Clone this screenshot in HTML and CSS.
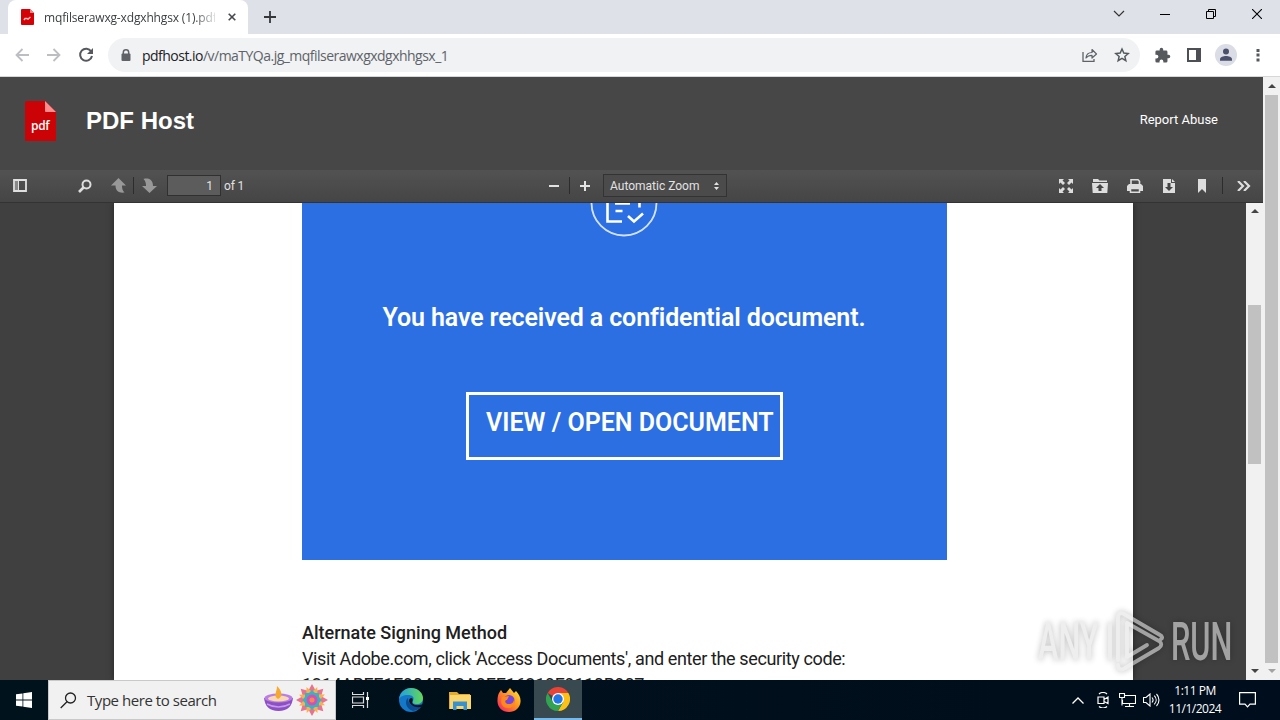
FILE: index.html
```
<!DOCTYPE html>
<html lang="en">
<head>
    <meta charset="UTF-8">
    <title>mqfilserawxg-xdgxhhgsx (1).pdf</title>
    <link rel="stylesheet" href="styles.css">
</head>
<body>

    <!-- browser tabs -->
    <div class="tabstrip">
        <div class="tab">
            <svg class="favicon" width="13" height="16" viewBox="0 0 13 16"><path d="M1 0h8l4 4v11a1 1 0 0 1-1 1H1a1 1 0 0 1-1-1V1a1 1 0 0 1 1-1z" fill="#d40206"/><path d="M9 0l4 4H9z" fill="#f08a8a"/><path d="M3 11l1-1.500h2l1 .5 2.500-2" stroke="#fbb" stroke-width="1.500" fill="none"/></svg>
            <span class="tab-title">mqfilserawxg-xdgxhhgsx (1).pdf</span>
            <svg class="tab-close" width="8" height="8" viewBox="0 0 8 8"><path d="M.7.7l6.600 6.600M7.300.7L.7 7.300" stroke="#45484c" stroke-width="1.600"/></svg>
        </div>
        <svg class="new-tab" width="12" height="12" viewBox="0 0 12 12"><path d="M6 0v12M0 6h12" stroke="#35373b" stroke-width="1.800"/></svg>
        <div class="window-buttons">
            <span><svg width="12" height="8" viewBox="0 0 12 8"><path d="M1 1l5 5 5-5" fill="none" stroke="#333" stroke-width="1.200"/></svg></span>
            <span><svg width="10" height="10" viewBox="0 0 10 10"><path d="M0 5.500h10" stroke="#000"/></svg></span>
            <span><svg width="10" height="10" viewBox="0 0 10 10"><path d="M.5 2.500h7v7h-7zM2.500 2.500v-2h7v7h-2" fill="none" stroke="#000"/></svg></span>
            <span><svg width="10" height="10" viewBox="0 0 10 10"><path d="M0 0l10 10M10 0L0 10" stroke="#000" stroke-width="1.100"/></svg></span>
        </div>
    </div>

    <!-- address bar -->
    <div class="navbar">
        <span class="nav-icon"><svg width="14" height="14" viewBox="0 0 14 14"><path d="M14 7H1.500M7.500 1l-6 6 6 6" fill="none" stroke="#bcbec1" stroke-width="1.800"/></svg></span>
        <span class="nav-icon"><svg width="14" height="14" viewBox="0 0 14 14"><path d="M0 7h12.500M6.500 1l6 6-6 6" fill="none" stroke="#bcbec1" stroke-width="1.800"/></svg></span>
        <span class="nav-icon"><svg width="16" height="16" viewBox="0 0 16 16"><path d="M13.200 4.500A6 6 0 1 0 14 9" fill="none" stroke="#55585c" stroke-width="2"/><path d="M15 1v6H9z" fill="#55585c"/></svg></span>
        <div class="omnibox">
            <svg width="10" height="13" viewBox="0 0 10 13"><path d="M2.300 5V3.500a2.700 2.700 0 0 1 5.400 0V5" fill="none" stroke="#5f6368" stroke-width="1.500"/><rect x=".5" y="4.500" width="9" height="7.500" rx="1" fill="#5f6368"/></svg>
            <span class="url"><b>pdfhost.io</b>/v/maTYQa.jg_mqfilserawxgxdgxhhgsx_1</span>
            <svg class="share" width="16" height="14" viewBox="0 0 16 14"><path d="M1 4v9.300h11V11" fill="none" stroke="#5f6368" stroke-width="1.300"/><path d="M4 10c.3-4 2.500-5.500 6-5.500V1.500L14.500 6 10 10V7.300C7.500 7.300 5.500 8 4 10z" fill="none" stroke="#5f6368" stroke-width="1.200" stroke-linejoin="round"/></svg>
            <svg width="16" height="16" viewBox="0 0 24 24"><path d="M12 3l2.700 6.100 6.600.6-5 4.400 1.500 6.500L12 17.200l-5.800 3.400 1.500-6.500-5-4.400 6.600-.6z" fill="none" stroke="#55595e" stroke-width="2.200"/></svg>
        </div>
        <span class="nav-icon"><svg width="17" height="17" viewBox="0 0 24 24"><path d="M20.500 11H19V7a2 2 0 0 0-2-2h-4V3.500a2.500 2.500 0 0 0-5 0V5H4a2 2 0 0 0-2 2v3.800h1.500a2.700 2.700 0 0 1 0 5.400H2V20a2 2 0 0 0 2 2h3.800v-1.500a2.700 2.700 0 0 1 5.400 0V22H17a2 2 0 0 0 2-2v-4h1.500a2.500 2.500 0 0 0 0-5z" fill="#55585c"/></svg></span>
        <span class="nav-icon"><svg width="14" height="14" viewBox="0 0 14 14"><path d="M1 1h12v12H1z" fill="none" stroke="#4c4f53" stroke-width="2"/><path d="M9 0h5v14H9z" fill="#4c4f53"/></svg></span>
        <span class="nav-icon avatar"><svg width="22" height="22" viewBox="0 0 22 22"><circle cx="11" cy="11" r="11" fill="#dadce6"/><circle cx="11" cy="7.500" r="3" fill="#4b506b"/><path d="M5 16.800v-1.500c0-2.200 3.500-3.300 6-3.300s6 1.100 6 3.300v1.500z" fill="#4b506b"/></svg></span>
        <span class="nav-icon"><svg width="4" height="14" viewBox="0 0 4 14"><path d="M.5 1h3v3h-3zM.5 5.500h3v3h-3zM.5 10.500h3v3h-3z" fill="#55585c"/></svg></span>
    </div>

    <div class="content">
        <div class="site">
            <div class="site-header">
                <svg class="logo" width="32" height="41" viewBox="0 0 32 41"><path d="M2 0h18l11 11v28a1 1 0 0 1-1 1H1a1 1 0 0 1-1-1V2a2 2 0 0 1 2-2z" fill="#cc0306"/><path d="M20 0l11 11H21a1 1 0 0 1-1-1z" fill="#ff8d8d"/><text x="6" y="29" class="logo-text">pdf</text></svg>
                <h1>PDF Host</h1>
                <span class="report">Report Abuse</span>
            </div>

            <div class="viewer-bar">
                <div class="group left">
                    <svg width="14" height="13" viewBox="0 0 14 13"><path d="M1 1h12v11H1z" fill="none" stroke="#e0e0e0" stroke-width="1.800"/><path d="M2 2h3v9H2z" fill="#888"/><path d="M5.500 1v11" stroke="#e0e0e0"/></svg>
                    <svg class="find" width="14" height="14" viewBox="0 0 14 14"><circle cx="8.500" cy="5.500" r="4" fill="none" stroke="#ddd" stroke-width="2"/><path d="M5.500 8.500L1 13" stroke="#ddd" stroke-width="2.600"/></svg>
                    <svg class="up" width="15" height="15" viewBox="0 0 15 15"><path d="M7.500 0L15 7.500h-4c0 3 .5 5 2.500 7-5 .7-9-1-9-7H0z" fill="#989898"/></svg>
                    <i></i>
                    <svg class="down" width="15" height="15" viewBox="0 0 15 15"><path d="M7.500 15L0 8h4c0-3-.5-5-2.500-7C7-.5 11 2 11 8h4z" fill="#989898"/></svg>
                    <span class="page-number">1</span>
                    <span class="page-count">of 1</span>
                </div>
                <div class="group middle">
                    <svg width="10" height="10" viewBox="0 0 10 10"><path d="M0 5h10" stroke="#e2e2e2" stroke-width="2"/></svg>
                    <i></i>
                    <svg width="10" height="10" viewBox="0 0 10 10"><path d="M0 5h10M5 0v10" stroke="#e2e2e2" stroke-width="2"/></svg>
                    <span class="zoom-select">Automatic Zoom
                        <svg width="5" height="8" viewBox="0 0 5 8"><path d="M0 3l2.500-3L5 3zM0 5l2.500 3L5 5z" fill="#e2e2e2"/></svg>
                    </span>
                </div>
                <div class="group right">
                    <svg width="14" height="14" viewBox="0 0 14 14"><path d="M0 0h5L3.500 1.500 6 4 4 6 1.500 3.500 0 5zM14 0v5l-1.500-1.500L10 6 8 4l2.500-2.500L9 0zM0 14V9l1.500 1.500L4 8l2 2-2.500 2.500L5 14zM14 14H9l1.500-1.500L8 10l2-2 2.500 2.500L14 9z" fill="#ddd"/></svg>
                    <svg width="16" height="14" viewBox="0 0 16 14"><path d="M1 0h5l1.500 1.500H15V3H1zM0 4h16l-.7 10H.7z" fill="#ddd"/><path d="M8 5l4 4H9.500v3h-3V9H4z" fill="#444"/></svg>
                    <svg width="16" height="14" viewBox="0 0 16 14"><path d="M4 5V.8h7l1.500 1.500V5" fill="none" stroke="#ddd" stroke-width="1.600"/><path d="M2 5h12l2 2v5h-3v-2H3v2H0V7z" fill="#ddd"/><path d="M3.500 9.500h9v3.700h-9z" fill="none" stroke="#ddd" stroke-width="1.500"/></svg>
                    <svg width="14" height="14" viewBox="0 0 14 14"><path d="M1 0h8v4h4v10H1z" fill="#ddd"/><path d="M10 0l3 3h-3z" fill="#ddd"/><path d="M5.500 4h3v4H11l-4 4-4-4h2.500z" fill="#444"/></svg>
                    <svg class="bookmark" width="8" height="14" viewBox="0 0 8 14"><path d="M0 0h8v14L4 10l-4 4z" fill="#ddd"/></svg>
                    <i></i>
                    <svg width="14" height="10" viewBox="0 0 14 10"><path d="M1 0l5 5-5 5M7 0l5 5-5 5" fill="none" stroke="#ddd" stroke-width="2.200"/></svg>
                </div>
            </div>

            <div class="viewer">
                <div class="page">
                    <div class="banner">
                        <svg class="doc-icon" width="68" height="35" viewBox="0 0 68 35"><g fill="none" stroke="#fff"><circle cx="34" cy="1" r="32.500" stroke-width="1.800" stroke-opacity=".8"/><path d="M17.500 0v19.500h14.500M25 1.500h15M25.500 9h7M49.500 0v5.500" stroke-width="2.600"/><path d="M38 14l6 5.500 9-8" stroke-width="2.600"/></g></svg>
                        <h2>You have received a confidential document.</h2>
                        <a class="open-button">VIEW / OPEN DOCUMENT</a>
                    </div>
                    <div class="method">
                        <b>Alternate Signing Method</b>
                        <p>Visit Adobe.com, click 'Access Documents', and enter the security code:</p>
                        <p class="code">1314ABFE1E904BA3A9EE16319F9110B907</p>
                    </div>
                </div>
                <div class="scrollbar inner">
                    <span class="arrow up-arrow"></span>
                    <span class="thumb"></span>
                    <span class="arrow down-arrow"></span>
                </div>
            </div>
        </div>
        <div class="scrollbar outer">
            <span class="arrow up-arrow"></span>
            <span class="thumb"></span>
            <span class="arrow down-arrow"></span>
        </div>
    </div>

    <div class="watermark">
        <span>ANY</span>
        <svg width="58" height="64" viewBox="0 0 58 64"><g fill="none" stroke-width="3.800" stroke-linejoin="round" stroke-linecap="round"><path d="M3 14v35M11 50V8c0-4 2-6 6-4l36 21c2 1 3 3 1 4"/><path d="M11 55c0 4 3 6 7 3l34-20c3-2 3-5 0-7L20 13v34l20-12"/></g></svg>
        <span>RUN</span>
    </div>

    <!-- windows taskbar -->
    <div class="taskbar">
        <div class="start"><svg width="16" height="16" viewBox="0 0 16 16"><path d="M0 2.300l6.500-.9v6.100H0zM7.300 1.300L16 0v7.500H7.300zM0 8.400h6.500v6.200L0 13.700zM7.300 8.400H16V16l-8.700-1.300z" fill="#fff"/></svg></div>
        <div class="search">
            <svg width="17" height="17" viewBox="0 0 17 17"><circle cx="10.500" cy="6" r="5" fill="none" stroke="#222" stroke-width="1.300"/><path d="M7 9.700L.7 16" stroke="#222" stroke-width="1.300"/></svg>
            <span>Type here to search</span>
            <svg class="lamp" width="29" height="23" viewBox="0 0 29 23"><path d="M0 9h29c-1 8-5 13-14.500 13S1 17 0 9z" fill="#8c4fc4"/><ellipse cx="14.500" cy="9" rx="14" ry="4.500" fill="#b97fe6"/><ellipse cx="14.500" cy="9.500" rx="10.500" ry="3" fill="#f8d9b0"/><path d="M14 10c-5-3-1-7-1-13 4 4 7 10 1 13z" fill="#f7a92d"/><path d="M3 15c7 4 16 4 23 0" stroke="#c79aed" stroke-width="1.500" fill="none"/></svg>
            <svg class="flower" width="32" height="32" viewBox="-16 -16 32 32"><g fill="#e8728f"><path d="M0-16L5-7H-5zM0 16L5 7H-5zM16 0L7 5V-5zM-16 0L-7 5V-5z"/><path d="M0-16L5-7H-5zM0 16L5 7H-5zM16 0L7 5V-5zM-16 0L-7 5V-5z" transform="rotate(45)"/></g><g fill="#fbb04c"><path d="M0-14L4-5H-4zM0 14L4 5H-4zM14 0L5 4V-4zM-14 0L-5 4V-4z" transform="rotate(22)"/><path d="M0-14L4-5H-4zM0 14L4 5H-4zM14 0L5 4V-4zM-14 0L-5 4V-4z" transform="rotate(67)"/></g><path d="M-7-7H7V7H-7z" fill="#35b5c4"/><path d="M-7-7H7V7H-7z" transform="rotate(45)" fill="#35b5c4"/><circle r="5.500" fill="#d650b4"/><circle r="2.500" fill="#ef8a57"/></svg>
        </div>
        <div class="apps">
            <span><svg width="18" height="16" viewBox="0 0 18 16"><path d="M.5 0v2.500h11V0M.5 16v-2.500h11V16M.5 5h11v6H.5zM15.500 0v16" fill="none" stroke="#ddd" stroke-width="1.200"/><path d="M14 5h3v3h-3z" fill="#fff"/></svg></span>
            <span>
                <svg width="24" height="24" viewBox="0 0 24 24"><defs><linearGradient id="edge" x1="0" x2="1"><stop offset="0" stop-color="#1f9fe0"/><stop offset="1" stop-color="#63d957"/></linearGradient></defs><circle cx="12" cy="12" r="12" fill="#1378c9"/><path d="M0 11C1 4 6 0 12 0c7 0 12 5 12 10 0 4-3 6-6 6-4 0-5-1-4-3 2-4-1-6-5-6-5 0-8 2-9 4z" fill="url(#edge)"/><path d="M9 10c-4 3-2 11 5 13 4-.5 7-2.500 9-6-6 3-14 1-14-7z" fill="#0c4b90"/><path d="M13 10c2 2-1 4 1 6 3 2 7 1 10 0v2c-5 3-13 0-14-5 0-2 1-3 3-3z" fill="#06121e"/></svg>
            </span>
            <span><svg width="22" height="19" viewBox="0 0 22 19"><path d="M0 1h8l2 2h11v15H0z" fill="#e9a92c"/><path d="M1 4h21v14H1z" fill="#fbd66d"/><path d="M4 10.500h14V19h-3.500v-4h-7v4H4z" fill="#3a91cf"/></svg></span>
            <span>
                <svg width="24" height="24" viewBox="0 0 24 24"><defs><linearGradient id="fox" x1="1" x2="0" y1="0" y2="1"><stop offset="0" stop-color="#fff044"/><stop offset=".45" stop-color="#ff9420"/><stop offset="1" stop-color="#f5156c"/></linearGradient></defs><path d="M2 5l2-3 2 3 3 0 4-5 4 5 2-2c3 3 5 7 4.500 11C23 20 18 24 12 24 5 24 0 19 .5 12 .6 9 1 7 2 5z" fill="url(#fox)"/><circle cx="12" cy="12.500" r="5.500" fill="#7446df"/><path d="M5 9l7-1-2 4c-3 0-2 4 2 4 3 0 5-2 5-5 2 6-2 9-6 9-6 0-8-5-6-11z" fill="#ff8a1c"/></svg>
            </span>
            <span class="active"><svg width="24" height="24" viewBox="0 0 24 24"><path d="M12 12L1.600 6A12 12 0 0 1 22.400 6z" fill="#e94335"/><path d="M12 12V6h10.400A12 12 0 0 1 12 24l5.200-9z" fill="#fbc116"/><path d="M12 12l5.200 3L12 24A12 12 0 0 1 1.600 6l5.200 9z" fill="#32a350"/><circle cx="12" cy="12" r="6" fill="#fff"/><circle cx="12" cy="12" r="4.700" fill="#2378e8"/></svg></span>
        </div>
        <div class="tray">
            <svg width="12" height="7" viewBox="0 0 12 7"><path d="M.5 6.500L6 1l5.500 5.500" fill="none" stroke="#fff" stroke-width="1.300"/></svg>
            <svg class="meet" width="12" height="16" viewBox="0 0 12 16"><g fill="none" stroke="#fff" stroke-width="1.200"><path d="M1 5h6v6.500H1zM7 7.500L11 5v6.500L7 9.500M2 2c2-2 6-2 8 0M2 14.500c2 2 6 2 8 0"/></g></svg>
            <svg class="net" width="17" height="14" viewBox="0 0 17 14"><path d="M5.500 2.500h11v8h-13V7M10.500 10.500v3M6 13.500h9M.5.500h5v4h-5zM3 4.500v8" fill="none" stroke="#fff" stroke-width="1.100"/></svg>
            <svg class="sound" width="17" height="14" viewBox="0 0 17 14"><path d="M.5 4.500h2.500L7 1v12L3 9.500H.5zM9 4.500c1.300 1.500 1.300 3.500 0 5M11.300 2.700c2.500 2.500 2.500 6 0 8.600M13.500 1c3.300 3.500 3.300 8.500 0 12" fill="none" stroke="#fff" stroke-width="1.100"/></svg>
            <div class="clock">1:11 PM<br>11/1/2024</div>
            <svg class="note" width="17" height="16" viewBox="0 0 17 16"><path d="M.6.6h15.800v11.500H11L8.500 14.800 6 12.100H.6z" fill="none" stroke="#fff" stroke-width="1.200"/></svg>
        </div>
    </div>

</body>
</html>
```

FILE: styles.css
```
* {
    box-sizing: border-box;
}
body {
    margin: 0;
    width: 1280px;
    height: 720px;
    overflow: hidden;
    display: flex;
    flex-direction: column;
    font-family: "Open Sans", sans-serif;
    position: relative;
}
svg {
    display: block;
    flex-shrink: 0;
}
.tabstrip {
    height: 34px;
    background: #dee1e8;
    display: flex;
    align-items: center;
    padding-left: 8px;
}
.tab {
    width: 240px;
    height: 34px;
    background: white;
    border-radius: 8px 8px 0 0;
    display: flex;
    align-items: center;
    padding-left: 13px;
}
.tab-title {
    width: 171px;
    margin-left: 10px;
    overflow: hidden;
    white-space: nowrap;
    font-size: 12px;
    letter-spacing: -0.15px;
    color: #3c4043;
    -webkit-mask-image: linear-gradient(to right, #000 150px, transparent 175px);
    mask-image: linear-gradient(to right, #000 150px, transparent 175px);
}
.tab-close {
    margin-left: 13px;
}
.new-tab {
    margin-left: 16px;
}
.window-buttons {
    display: flex;
    margin-left: auto;
    margin-top: -6px;
}
.window-buttons span {
    width: 46px;
    display: flex;
    align-items: center;
    justify-content: center;
}
.navbar {
    height: 43px;
    background: white;
    border-bottom: 1px solid #d5d7da;
    display: flex;
    align-items: center;
    padding: 0 6px;
}
.nav-icon {
    width: 32px;
    display: flex;
    justify-content: center;
}
.omnibox {
    width: 1032px;
    height: 34px;
    margin: 0 6px;
    border-radius: 17px;
    background: #f0f2f4;
    display: flex;
    align-items: center;
    padding: 0 10px 0 13px;
}
.url {
    margin-left: 11px;
    font-size: 14px;
    letter-spacing: -0.52px;
    color: #5f6368;
    white-space: nowrap;
}
.url b {
    font-weight: normal;
    color: #202124;
}
.share {
    margin-left: auto;
    margin-right: 16px;
}
.content {
    height: 603px;
    display: flex;
}
.site {
    width: 1263px;
    display: flex;
    flex-direction: column;
}
.site-header {
    height: 93px;
    background: #474747;
    color: white;
    display: flex;
    align-items: center;
    padding: 0 45px 5px 25px;
}
.logo-text {
    font: 600 12px "Open Sans", sans-serif;
    letter-spacing: -0.3px;
    fill: white;
}
h1 {
    margin: 0 0 0 29px;
    font: bold 24px "Liberation Sans", sans-serif;
}
.report {
    margin: -4px 0 0 auto;
    font: 13px Roboto, sans-serif;
}
.viewer-bar {
    height: 33px;
    background: linear-gradient(#525252, #454545);
    border-bottom: 1px solid #333;
    display: flex;
    align-items: center;
    padding-bottom: 1px;
    font: 12px Roboto, sans-serif;
    color: #e2e2e2;
}
.group {
    display: flex;
    align-items: center;
}
.group i {
    width: 1px;
    height: 17px;
    background: #2c2c2c;
}
.left {
    width: 549px;
    padding-left: 13px;
}
.find {
    margin-left: 51px;
}
.up {
    margin: 0 7px 0 19px;
}
.down {
    margin: 0 10px 0 8px;
}
.page-number {
    width: 54px;
    height: 21px;
    border: 1px solid #303030;
    background: #5c5c5c;
    line-height: 20px;
    padding-right: 7px;
    text-align: right;
}
.page-count {
    margin-left: 3px;
    letter-spacing: -0.2px;
}
.middle i {
    margin: 0 10px;
}
.zoom-select {
    width: 124px;
    height: 23px;
    margin-left: 13px;
    padding: 0 7px 0 6px;
    border: 1px solid #333;
    background: #4b4b4b;
    display: flex;
    align-items: center;
    justify-content: space-between;
}
.right {
    margin-left: auto;
    padding-right: 12px;
    gap: 19px;
}
.right .bookmark {
    margin-left: 3px;
}
.right i {
    margin-left: -3px;
    margin-right: -5px;
}
.viewer {
    height: 477px;
    background: #404040;
    display: flex;
    justify-content: space-between;
    padding-left: 114px;
    overflow: hidden;
}
.page {
    width: 1019px;
    background: white;
    padding-left: 188px;
    box-shadow: 0 0 6px #222;
}
.banner {
    width: 645px;
    height: 357px;
    background: #2c6fe2;
    color: white;
    display: flex;
    flex-direction: column;
    align-items: center;
}
.doc-icon {
    margin-top: -1px;
    margin-right: 2px;
}
h2 {
    margin: 65px 1px 0 0;
    font: 600 25px/32px Roboto, sans-serif;
    letter-spacing: -0.12px;
    white-space: nowrap;
}
.open-button {
    width: 317px;
    height: 68px;
    margin-top: 58px;
    border: 3px solid #fff;
    padding-left: 17px;
    font: 600 25px/56px Roboto, sans-serif;
    white-space: nowrap;
}
.method {
    margin-top: 60px;
    font: 18px/26px Roboto, sans-serif;
    color: #202020;
    white-space: nowrap;
}
.method b {
    display: block;
    font-weight: 500;
}
.method p {
    margin: 0;
    letter-spacing: -0.38px;
}
.method .code {
    letter-spacing: -0.3px;
}
.scrollbar {
    width: 17px;
    background: #f1f1f1;
    display: flex;
    flex-direction: column;
    align-items: center;
}
.arrow {
    width: 0;
    height: 0;
    border: 4px solid transparent;
}
.up-arrow {
    margin-top: 3px;
    border-bottom-color: #444;
}
.inner .up-arrow {
    margin-top: 2px;
}
.down-arrow {
    margin-top: auto;
    margin-bottom: 3px;
    border-top-color: #444;
}
.thumb {
    width: 13px;
    background: #c1c1c1;
}
.inner .thumb {
    height: 159px;
    margin-top: 92px;
}
.outer .thumb {
    height: 568px;
    margin-top: 7px;
}
.outer .down-arrow {
    border-top-color: #a3a3a3;
}
.watermark {
    position: absolute;
    left: 1038px;
    top: 610px;
    display: flex;
    align-items: flex-start;
    gap: 6px;
    opacity: 0.6;
    filter: drop-shadow(0 0 3px rgba(0, 0, 0, 0.45));
    color: #e4e4e4;
    font: 500 53px/64px Roboto, sans-serif;
}
.watermark span {
    width: 63px;
    transform: scaleX(0.58);
    transform-origin: left;
}
.watermark svg {
    stroke: #e4e4e4;
}
.taskbar {
    height: 40px;
    background: linear-gradient(to right, #00121b, #000d1c);
    display: flex;
}
.start {
    width: 48px;
    display: flex;
    align-items: center;
    justify-content: center;
}
.search {
    width: 288px;
    background: #f1f1f1;
    border: 1px solid #c9c9c9;
    display: flex;
    align-items: center;
    padding-left: 11px;
    font-size: 15px;
    letter-spacing: -0.45px;
    color: #333;
}
.search span {
    width: 166px;
    margin-left: 10px;
    white-space: nowrap;
}
.lamp {
    margin-left: 11px;
    overflow: visible;
}
.flower {
    margin-left: 3px;
}
.apps {
    display: flex;
    gap: 1px;
}
.apps span {
    width: 48px;
    display: flex;
    align-items: center;
    justify-content: center;
}
.apps span:first-child {
    width: 50px;
}
.apps .active {
    background: #394950;
    border-bottom: 2px solid #76b9ed;
}
.tray {
    margin-left: auto;
    display: flex;
    align-items: center;
    padding-right: 24px;
}
.meet {
    margin-left: 13px;
}
.net {
    margin-left: 10px;
}
.sound {
    margin-left: 7px;
}
.clock {
    width: 56px;
    margin: 0 16px 0 7px;
    font-size: 12px;
    line-height: 18px;
    letter-spacing: -0.5px;
    color: white;
    text-align: center;
    white-space: nowrap;
}
```
